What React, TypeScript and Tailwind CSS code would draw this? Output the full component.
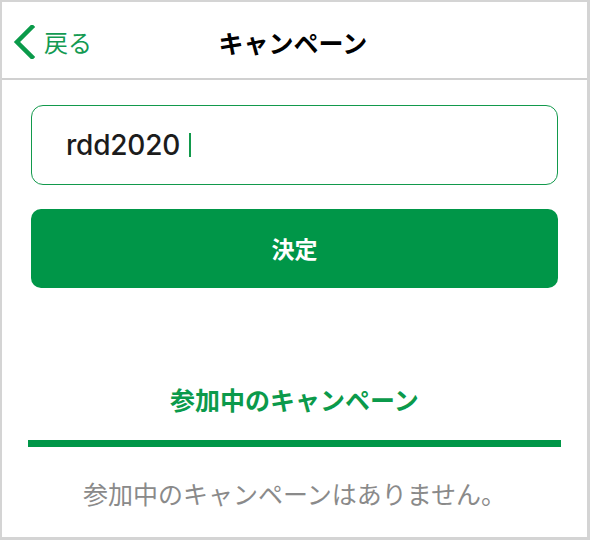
import React from 'react';

const jp = "font-['Noto_Sans_CJK_JP',sans-serif]";

const App: React.FC = () => {
  return (
    <div className={`w-[590px] h-[540px] bg-white border-t-2 border-l-2 border-r-[3px] border-b-[3px] border-[#d4d4d4] flex flex-col ${jp}`}>
      {/* Header */}
      <header className="h-[78px] shrink-0 border-b-2 border-[#d0d0d0] grid grid-cols-[1fr_auto_1fr] items-center">
        <button className="flex items-center gap-[9px] pl-[11px] text-[#129a52] text-[24px] leading-none">
          <svg width="22" height="34" viewBox="0 0 22 34" className="mt-[4px]">
            <path d="M19 2 L4 17 L19 32" fill="none" stroke="#0a9a4a" strokeWidth="4.5" strokeLinecap="square" />
          </svg>
          <span className="mt-[3px]">戻る</span>
        </button>
        <h1 className="text-[25px] font-bold text-black leading-none mt-[4px] -ml-[3px]">キャンペーン</h1>
        <div />
      </header>

      {/* Code form */}
      <div className="px-[29px] pt-[25px] flex flex-col gap-[24px]">
        <div className="h-[80px] rounded-[12px] border border-[#12994c] flex items-center pl-[34px]">
          <span className="font-['Inter',sans-serif] font-medium text-[28px] text-[#1c1c1c] tracking-[-0.2px]">rdd2020</span>
          <span className="ml-[9px] w-[2px] h-[24px] bg-[#12994c]" />
        </div>
        <button className="h-[79px] rounded-[10px] bg-[#009648] text-white text-[23px] font-bold">
          決定
        </button>
      </div>

      {/* Tab */}
      <div className="mt-[95px] flex flex-col items-center">
        <div className="text-[25px] leading-[32px] font-bold text-[#0b9a4b]">参加中のキャンペーン</div>
        <div className="mt-[25px] h-[7px] w-[533px] bg-[#009648]" />
        <p className="mt-[30px] text-[25px] leading-[32px] text-[#8a8a8a]">参加中のキャンペーンはありません。</p>
      </div>
    </div>
  );
};

export default App;
